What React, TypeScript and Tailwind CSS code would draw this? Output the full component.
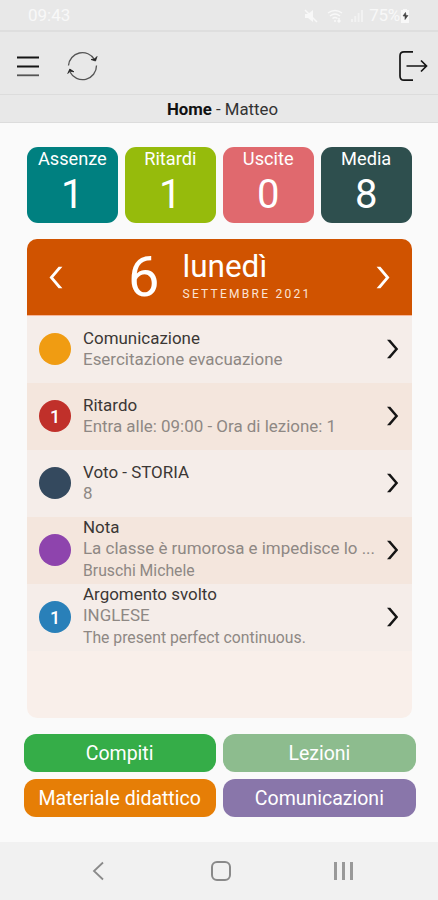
import { clsx } from 'clsx';

interface DayEvent {
    title: string;
    detail: string;
    note?: string;
    badge?: string;
    color: string;
}

const stats = [
    { label: 'Assenze', value: 1, color: 'bg-[#008080]' },
    { label: 'Ritardi', value: 1, color: 'bg-[#96bb0c]' },
    { label: 'Uscite', value: 0, color: 'bg-[#e0696e]' },
    { label: 'Media', value: 8, color: 'bg-[#2e4f4e]' },
];

const events: DayEvent[] = [
    { title: 'Comunicazione', detail: 'Esercitazione evacuazione', color: 'bg-[#f09c12]' },
    { title: 'Ritardo', detail: 'Entra alle: 09:00 - Ora di lezione: 1', badge: '1', color: 'bg-[#c0302a]' },
    { title: 'Voto - STORIA', detail: '8', color: 'bg-[#34495e]' },
    { title: 'Nota', detail: 'La classe è rumorosa e impedisce lo ...', note: 'Bruschi Michele', color: 'bg-[#8e44ad]' },
    { title: 'Argomento svolto', detail: 'INGLESE', note: 'The present perfect continuous.', badge: '1', color: 'bg-[#2980b9]' },
];

const actions = [
    { label: 'Compiti', color: 'bg-[#35ad48]' },
    { label: 'Lezioni', color: 'bg-[#8dbc8e]' },
    { label: 'Materiale didattico', color: 'bg-[#e67e06]' },
    { label: 'Comunicazioni', color: 'bg-[#8976aa]' },
];

function StatusBar() {
    return (
        <div className="flex h-8 items-center justify-between border-b-2 border-[#dedede] pl-7 pr-[27px] pt-0.5 text-[17px] text-[#f8f8f8]">
            <span>09:43</span>
            <div className="flex items-center">
                <svg className="mr-2 h-4 w-4" viewBox="0 0 16 16" fill="currentColor">
                    <path d="M2 6h3l5-4v12l-5-4H2z" />
                    <path d="M2 2l12 12" stroke="currentColor" strokeWidth="1.5" />
                </svg>
                <svg className="mr-2 h-4 w-4" viewBox="0 0 16 16" fill="none" stroke="currentColor" strokeWidth="1.5">
                    <path d="M1 5q7-5 14 0M3 8q5-4 10 0M5.500 10.500q2.500-2 5 0M8 12v2M12 10v4m-1.500-1.500L12 14l1.500-1.500" />
                </svg>
                <svg className="mr-1.5 h-3 w-3" viewBox="0 0 12 12" fill="currentColor">
                    <path d="M0 9h2v3H0zM3.300 6h2v6h-2zM6.600 3h2v9h-2zM10 0h2v12h-2z" opacity=".6" />
                </svg>
                <span className="-mr-px tracking-[-0.3px]">75%</span>
                <svg className="h-4 w-3" viewBox="0 0 12 16">
                    <path d="M2 2h2V1h4v1h2v13H2z" fill="currentColor" />
                    <path d="M6.500 4.500L4 8h2v3.500L9 7.500H7z" fill="#444" stroke="#444" strokeWidth=".6" />
                </svg>
            </div>
        </div>
    );
}

function Toolbar() {
    return (
        <div className="flex h-[62px] items-center px-4 pt-1.5 text-[#151515]">
            <svg className="h-6 w-6" viewBox="0 0 24 24" stroke="currentColor" strokeWidth="1.800">
                <path d="M1 3.500h22M1 12.500h22" />
                <path d="M1 21.300h22" stroke="#555" />
            </svg>
            <svg className="ml-[26px] h-8 w-8" viewBox="0 0 32 32" fill="none" stroke="#555" strokeWidth="1.300">
                <path d="M2.500 15.500A14 14 0 0 1 28.500 9.500M30.500 15.500A14 14 0 0 1 4 22" />
                <path d="M25 9.500l4.500 1.500 1.500-4.500-2.500 2.500z" fill="#222" stroke="#222" strokeWidth=".8" />
                <path d="M1.800 23.500l2-4.500 4.200 2.800-4-.6z" fill="#222" stroke="#222" strokeWidth=".8" />
            </svg>
            <svg className="-mr-[6px] ml-auto h-8 w-[30px]" viewBox="0 0 30 32" fill="none" stroke="currentColor" strokeWidth="1.700">
                <path d="M15 1.800H6Q2 1.800 2 6V26Q2 30.200 6 30.200H15" />
                <path d="M8.500 16H28.500M23 10.500L28.500 16 23 21.500" />
            </svg>
        </div>
    );
}

function Chevron({ className, back }: { className?: string; back?: boolean }) {
    return (
        <svg className={className} viewBox="0 0 12 20" fill="currentColor">
            <path d={back ? 'M8.700 .7H12L4 10 12 19.300H8.700L.8 10z' : 'M3.300 .7H0L8 10 0 19.300H3.300L11.200 10z'} />
        </svg>
    );
}

function DayHeader() {
    return (
        <div className="flex h-[76px] items-center bg-[#d05300] pl-[21px] pr-[21px] text-white">
            <Chevron back className="h-[23px] w-[15px]" />
            <div className="ml-[65px] w-[31px] text-[56px] leading-[76px]">6</div>
            <div className="ml-[23.500px]">
                <div className="-mt-1 text-[31.500px] leading-9">lunedì</div>
                <div className="mt-px text-[12px] leading-4 tracking-[2.250px] text-[#fbe3d5]">SETTEMBRE 2021</div>
            </div>
            <Chevron className="ml-auto h-[23px] w-[15px]" />
        </div>
    );
}

function EventRow({ event, odd }: { event: DayEvent; odd: boolean }) {
    return (
        <div className={clsx('flex h-[67px] items-center px-3', odd ? 'bg-[#f4e6dd]' : 'bg-[#f5ede9]')}>
            <div className={clsx('-mt-px flex h-8 w-8 shrink-0 items-center justify-center rounded-full text-[18px] font-medium text-white', event.color)}>
                {event.badge}
            </div>
            <div
                className={clsx(
                    'ml-3 min-w-0 flex-1 whitespace-nowrap text-[16.950px] leading-[21.500px] text-[#8e8884]',
                    event.note ? '-mt-[3px]' : '-mt-px',
                )}
            >
                <div className="text-[#3b3735]">{event.title}</div>
                <div>{event.detail}</div>
                {event.note && <div className="text-[15.750px]">{event.note}</div>}
            </div>
            <Chevron className="-mt-px mr-px h-5 w-3 text-[#151515]" />
        </div>
    );
}

function NavBar() {
    return (
        <div className="flex h-[58px] items-center bg-[#f1f1f1] pl-[91px] text-[#8a8a8a]">
            <svg className="h-5 w-3.5" viewBox="0 0 14 20" fill="none" stroke="currentColor" strokeWidth="1.800">
                <path d="M12 1.500L3 10l9 8.500" />
            </svg>
            <div className="ml-[106px] h-5 w-5 rounded-[6px] border-2 border-current" />
            <div className="ml-[103px] flex gap-[5px]">
                <i className="h-[18px] w-[3px] bg-[#999]" />
                <i className="h-[18px] w-[3px] bg-[#999]" />
                <i className="h-[18px] w-[3px] bg-[#999]" />
            </div>
        </div>
    );
}

export default function App() {
    return (
        <div className="flex h-[900px] w-[438px] flex-col overflow-hidden bg-[#fafafa] font-[Roboto,sans-serif]">
            <header className="bg-[#e8e8e8]">
                <StatusBar />
                <Toolbar />
                <div className="h-[29px] border-y border-[#dcdcdc] pl-[7px] text-center text-[16.800px] leading-[29px] text-[#333]">
                    <b className="text-[#111]">Home</b> - Matteo
                </div>
            </header>

            <main className="flex-1 pt-[23.500px]">
                <div className="ml-[27px] grid w-[384.500px] grid-cols-4 gap-[7.300px]">
                    {stats.map((s) => (
                        <div key={s.label} className={clsx('h-[76.500px] rounded-[11px] text-center text-white', s.color)}>
                            <div className="pt-px text-[18.200px] leading-[22px]">{s.label}</div>
                            <div className="mt-1 text-[40px] leading-[42px]">{s.value}</div>
                        </div>
                    ))}
                </div>

                <section className="ml-[27px] mt-4 h-[479px] w-[384.500px] overflow-hidden rounded-[10px] bg-[#f9efea]">
                    <DayHeader />
                    <div className="border-t border-[#f6b598]">
                        {events.map((event, i) => (
                            <EventRow key={event.title} event={event} odd={i % 2 === 1} />
                        ))}
                    </div>
                </section>

                <div className="ml-[23.500px] mt-4 grid w-[392px] grid-cols-2 gap-[7.500px]">
                    {actions.map((a) => (
                        <button key={a.label} className={clsx('h-[37.500px] rounded-[12px] pt-0.5 text-[19.500px] text-white', a.color)}>
                            {a.label}
                        </button>
                    ))}
                </div>
            </main>

            <NavBar />
        </div>
    );
}
